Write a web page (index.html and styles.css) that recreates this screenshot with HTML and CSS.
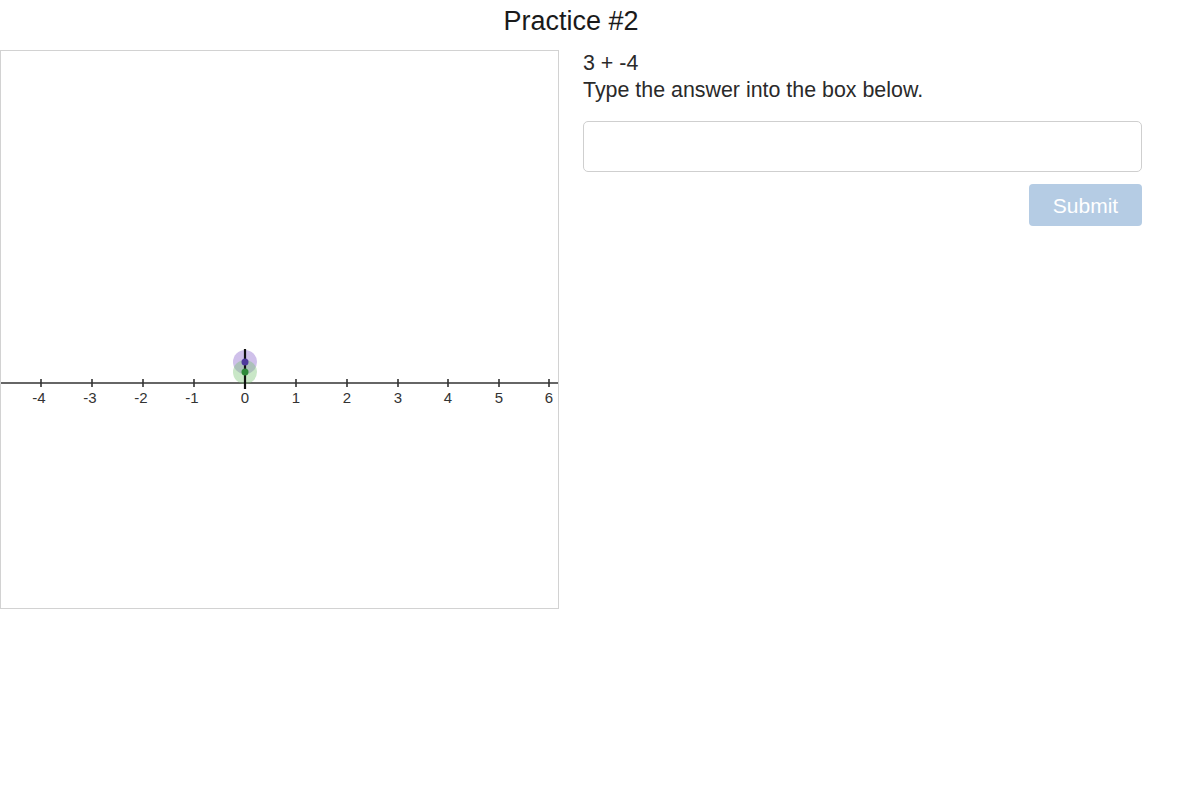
FILE: index.html
```html
<!DOCTYPE html>
<html>
<head>
<meta charset="utf-8">
<link rel="stylesheet" href="styles.css">
</head>
<body>
<div class="container">
  <h1 class="title">Practice #2</h1>
  <div class="row">
    <div class="board">
      <svg class="numline" width="557" height="557" viewBox="0 0 557 557">
        <line x1="0" y1="332" x2="557" y2="332" stroke="#333" stroke-width="1.6"/>
        <g stroke="#333" stroke-width="1.6">
          <line x1="40" y1="328" x2="40" y2="336"/>
          <line x1="91" y1="328" x2="91" y2="336"/>
          <line x1="142" y1="328" x2="142" y2="336"/>
          <line x1="193" y1="328" x2="193" y2="336"/>
          <line x1="244" y1="328" x2="244" y2="336"/>
          <line x1="295" y1="328" x2="295" y2="336"/>
          <line x1="346" y1="328" x2="346" y2="336"/>
          <line x1="397" y1="328" x2="397" y2="336"/>
          <line x1="447" y1="328" x2="447" y2="336"/>
          <line x1="498" y1="328" x2="498" y2="336"/>
          <line x1="548" y1="328" x2="548" y2="336"/>
        </g>
        <g class="labels" text-anchor="middle">
          <text x="38" y="352">-4</text>
          <text x="89" y="352">-3</text>
          <text x="140" y="352">-2</text>
          <text x="191" y="352">-1</text>
          <text x="244" y="352">0</text>
          <text x="295" y="352">1</text>
          <text x="346" y="352">2</text>
          <text x="397" y="352">3</text>
          <text x="447" y="352">4</text>
          <text x="498" y="352">5</text>
          <text x="548" y="352">6</text>
        </g>
        <circle cx="244" cy="311" r="12" fill="rgba(140,105,205,0.42)"/>
        <circle cx="244" cy="321" r="12" fill="rgba(120,195,115,0.40)"/>
        <line x1="244" y1="298" x2="244" y2="338" stroke="#111" stroke-width="2.2"/>
        <circle cx="244" cy="311" r="3.5" fill="#4f3a9c"/>
        <circle cx="244" cy="321" r="3.5" fill="#2f8a3a"/>
      </svg>
    </div>
    <div class="panel">
      <div class="question">3 + -4</div>
      <div class="prompt">Type the answer into the box below.</div>
      <input class="answer" type="text">
      <div class="actions">
        <button class="submit" disabled>Submit</button>
      </div>
    </div>
  </div>
</div>
</body>
</html>
```

FILE: styles.css
```css
html, body {
  margin: 0;
  padding: 0;
  background: #fff;
}
body {
  font-family: "Liberation Sans", Arial, Helvetica, sans-serif;
  color: #2a2a2a;
}
.container {
  width: 1142px;
}
.title {
  margin: 0 0 14px 0;
  padding-top: 6px;
  font-size: 27px;
  line-height: 30px;
  font-weight: normal;
  text-align: center;
  color: #1a1a1a;
}
.row {
  display: flex;
  gap: 24px;
  align-items: flex-start;
}
.board {
  width: 557px;
  height: 557px;
  border: 1px solid #d2d2d2;
  flex: none;
}
.numline {
  display: block;
}
.labels text {
  font-family: "Liberation Sans", Arial, sans-serif;
  font-size: 15px;
  fill: #333;
}
.panel {
  flex: 1;
  display: flex;
  flex-direction: column;
}
.question, .prompt {
  font-size: 21.4px;
  line-height: 27px;
  color: #2a2a2a;
}
.answer {
  margin: 17px 0 0 0;
  box-sizing: border-box;
  width: 100%;
  height: 51px;
  border: 1px solid #cfcfcf;
  border-radius: 5px;
  padding: 6px 12px;
  font-size: 20px;
  font-family: inherit;
  outline: none;
}
.actions {
  display: flex;
  justify-content: flex-end;
  margin-top: 12px;
}
.submit {
  width: 113px;
  height: 42px;
  border: none;
  border-radius: 4px;
  background: #b5cce4;
  color: #fff;
  font-family: inherit;
  font-size: 21px;
  padding: 2px 0 0 0;
}
```
